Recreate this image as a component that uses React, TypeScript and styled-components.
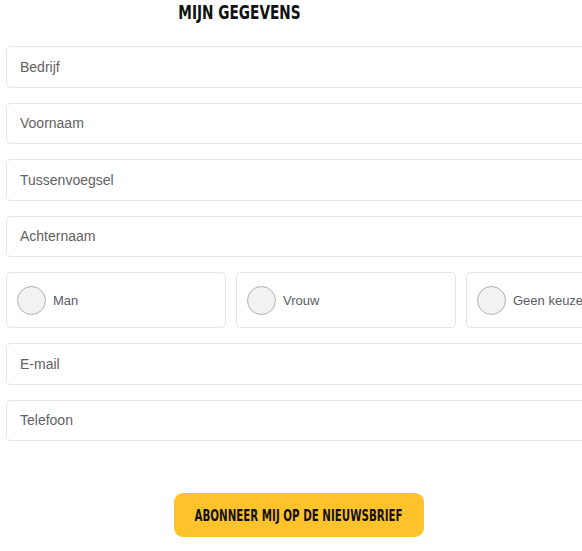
import React from "react";
import styled, { createGlobalStyle } from "styled-components";

const GlobalStyle = createGlobalStyle`
  body {
    margin: 0;
    background: #fff;
    overflow: hidden;
    font-family: "Liberation Sans", Arial, sans-serif;
  }
`;

export const Container = styled.main`
  display: flex;
  flex-direction: column;
  width: 680px;
  padding: 0 0 0 6px;
`;

export const Title = styled.h2`
  margin: 0;
  height: 46px;
  width: 467px;
  display: flex;
  justify-content: center;
  padding-top: 1px;
  box-sizing: border-box;
  font: bold 19px "DejaVu Sans Condensed", "DejaVu Sans", sans-serif;
  color: #111;
  span {
    display: inline-block;
    transform: scaleX(0.8);
    white-space: nowrap;
  }
`;

export const Fields = styled.div`
  display: flex;
  flex-direction: column;
  gap: 15px;
`;

export const Input = styled.input`
  box-sizing: border-box;
  width: 680px;
  height: 41.5px;
  padding: 0 13px;
  border: 1px solid #e4e4ea;
  border-radius: 5px;
  font: 14px "Liberation Sans", Arial, sans-serif;
  color: #555;
  outline: none;
  &::placeholder {
    color: #5f6166;
  }
`;

export const RadioRow = styled.div`
  display: grid;
  grid-template-columns: repeat(3, 220px);
  gap: 10px;
`;

export const RadioCard = styled.label`
  box-sizing: border-box;
  height: 56px;
  display: flex;
  align-items: center;
  gap: 7px;
  padding-left: 10px;
  border: 1px solid #e4e4ea;
  border-radius: 5px;
  font: 13px "Liberation Sans", Arial, sans-serif;
  color: #5a5c61;
`;

export const Circle = styled.span`
  box-sizing: border-box;
  width: 29px;
  height: 29px;
  border-radius: 50%;
  background: #f2f2f2;
  border: 1px solid #b0b0b0;
`;

export const Footer = styled.div`
  display: flex;
  padding: 52px 0 0 168px;
`;

export const Button = styled.button`
  width: 250px;
  height: 44px;
  padding: 0;
  display: flex;
  justify-content: center;
  align-items: center;
  border: none;
  border-radius: 9px;
  background: #fec32a;
  color: #111;
  font: bold 16px "DejaVu Sans Condensed", "DejaVu Sans", sans-serif;
  cursor: pointer;
  span {
    display: inline-block;
    transform: scaleX(0.715);
    white-space: nowrap;
  }
`;

const options = ["Man", "Vrouw", "Geen keuze"];

export default function App() {
  return (
    <Container>
      <GlobalStyle />
      <Title>
        <span>MIJN GEGEVENS</span>
      </Title>
      <Fields>
        <Input placeholder="Bedrijf" />
        <Input placeholder="Voornaam" />
        <Input placeholder="Tussenvoegsel" />
        <Input placeholder="Achternaam" />
        <RadioRow>
          {options.map((o) => (
            <RadioCard key={o}>
              <Circle />
              {o}
            </RadioCard>
          ))}
        </RadioRow>
        <Input placeholder="E-mail" />
        <Input placeholder="Telefoon" />
      </Fields>
      <Footer>
        <Button>
          <span>ABONNEER MIJ OP DE NIEUWSBRIEF</span>
        </Button>
      </Footer>
    </Container>
  );
}
